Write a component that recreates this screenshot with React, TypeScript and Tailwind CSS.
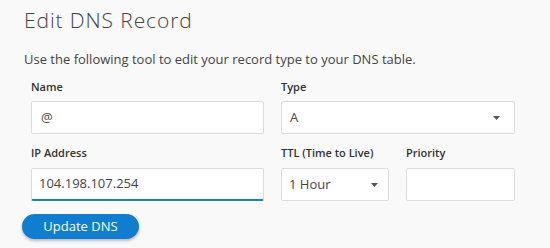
import React from "react";

function Caret() {
  return (
    <svg width="7" height="4" viewBox="0 0 7 4" className="shrink-0">
      <path d="M0 0 L7 0 L3.5 4 Z" fill="#555" />
    </svg>
  );
}

export default function App() {
  return (
    <div
      className="w-[550px] h-[248px] bg-[#f9f9f9] text-[#333] overflow-hidden"
      style={{ fontFamily: '"Open Sans", "Liberation Sans", sans-serif' }}
    >
      <div className="pl-[24px] pt-[6px]">
        <h1 className="text-[21px] leading-[28px] font-light tracking-[0.9px] text-[#444]">Edit DNS Record</h1>
        <p className="mt-[15px] text-[13px] leading-[20px] text-[#444]">
          Use the following tool to edit your record type to your DNS table.
        </p>
        <div className="pl-[7px] mt-[11px] w-[491px] grid grid-cols-[233px_234px] gap-x-[17px] gap-y-[12px]">
          <div className="flex flex-col">
            <label className="text-[11px] leading-[14px] font-semibold text-[#333] mb-[7px]">Name</label>
            <div className="h-[33px] bg-white border border-[#dcdcdc] rounded-[2px] flex items-center px-[9px] text-[13px] text-[#444]">
              @
            </div>
          </div>
          <div className="flex flex-col">
            <label className="text-[11px] leading-[14px] font-semibold text-[#333] mb-[7px]">Type</label>
            <div className="h-[33px] bg-white border border-[#dcdcdc] rounded-[2px] flex items-center justify-between pl-[8px] pr-[14px] text-[13px] text-[#444]">
              <span>A</span>
              <Caret />
            </div>
          </div>
          <div className="flex flex-col">
            <label className="text-[11px] leading-[14px] font-semibold text-[#333] mb-[8px]">IP Address</label>
            <div className="h-[33px] bg-white border border-[#dcdcdc] border-b-[2px] border-b-[#1b7fd0] rounded-[2px] flex items-center px-[7px] text-[13px] text-[#444]">
              104.198.107.254
            </div>
          </div>
          <div className="grid grid-cols-[108px_109px] gap-x-[17px]">
            <div className="flex flex-col">
              <label className="text-[11px] leading-[14px] font-semibold text-[#333] mb-[8px] whitespace-nowrap">TTL (Time to Live)</label>
              <div className="h-[33px] bg-white border border-[#dcdcdc] rounded-[2px] flex items-center justify-between pl-[7px] pr-[10px] text-[13px] text-[#444]">
                <span>1 Hour</span>
                <Caret />
              </div>
            </div>
            <div className="flex flex-col">
              <label className="text-[11px] leading-[14px] font-semibold text-[#333] mb-[8px]">Priority</label>
              <div className="h-[33px] bg-white border border-[#dcdcdc] rounded-[2px]"></div>
            </div>
          </div>
        </div>
        <button className="mt-[13px] -ml-[2px] w-[117px] h-[25px] rounded-full bg-[#0f7dd0] text-white text-[13px] font-medium shadow-[0_2px_3px_rgba(0,0,0,0.25)] flex items-center justify-center">
          Update DNS
        </button>
      </div>
    </div>
  );
}
